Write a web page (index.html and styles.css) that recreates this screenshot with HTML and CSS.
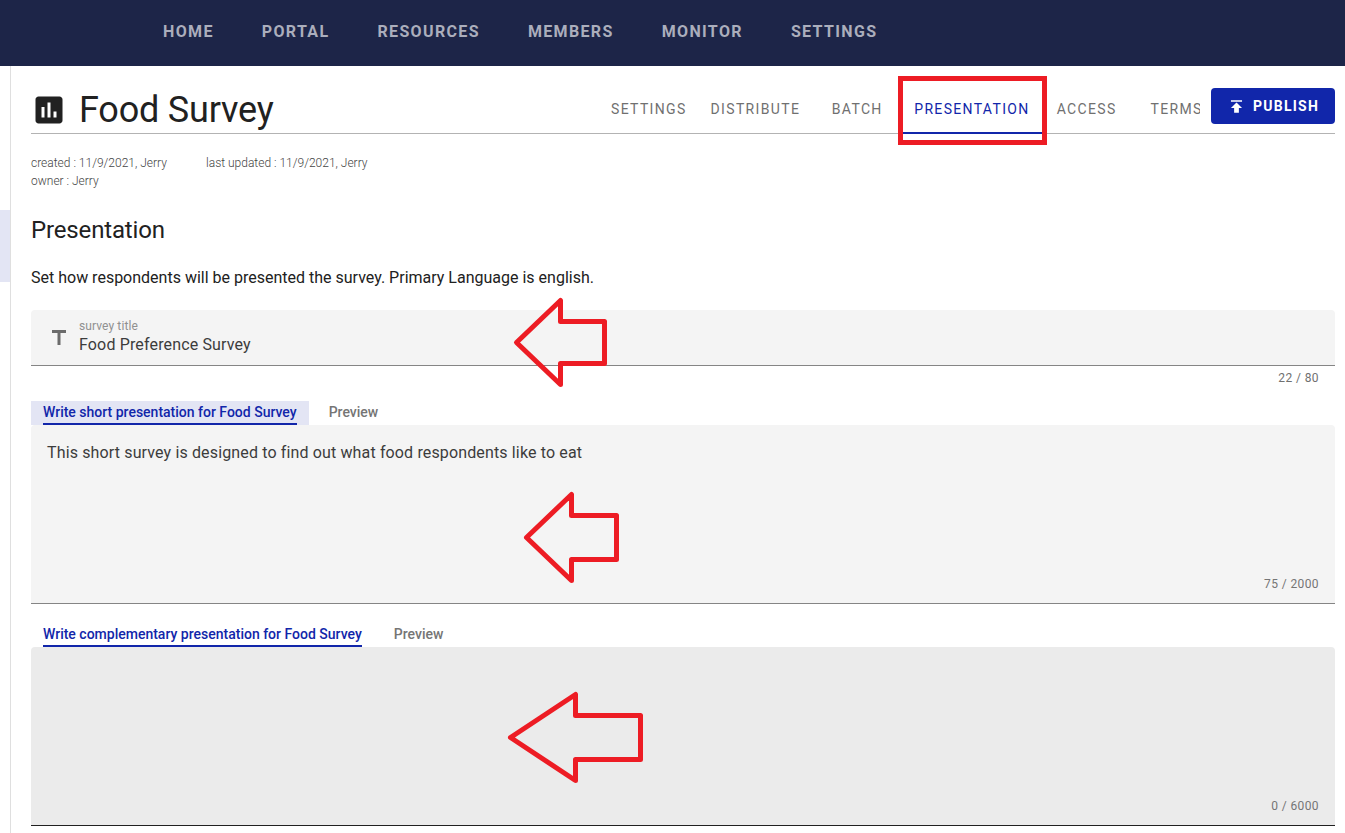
FILE: index.html
```html
<!DOCTYPE html>
<html lang="en">
<head>
<meta charset="utf-8">
<title>Food Survey</title>
<link rel="stylesheet" href="styles.css">
</head>
<body>
<div class="app">
  <nav class="topbar">
    <a>HOME</a><a>PORTAL</a><a>RESOURCES</a><a>MEMBERS</a><a>MONITOR</a><a>SETTINGS</a>
  </nav>
  <div class="body">
    <aside class="rail"><div class="rail-active"></div></aside>
    <main class="content">
      <header class="survey-head">
        <svg class="survey-icon" viewBox="0 0 24 24"><path d="M19 3H5c-1.100 0-2 .9-2 2v14c0 1.100.9 2 2 2h14c1.100 0 2-.9 2-2V5c0-1.100-.9-2-2-2zM9 17H7v-7h2v7zm4 0h-2V7h2v10zm4 0h-2v-4h2v4z"/></svg>
        <h1>Food Survey</h1>
        <div class="tabs">
          <div class="tab"><span>SETTINGS</span></div>
          <div class="tab"><span>DISTRIBUTE</span></div>
          <div class="tab"><span>BATCH</span></div>
          <div class="tab active"><span>PRESENTATION</span></div>
          <div class="tab"><span>ACCESS</span></div>
          <div class="tab"><span>TERMS</span></div>
        </div>
        <button class="publish"><svg viewBox="0 0 24 24"><path d="M5 4v2h14V4H5zm0 10h4v6h6v-6h4l-7-7-7 7z"/></svg><span>PUBLISH</span></button>
      </header>
      <div class="meta">
        <div class="meta-row"><span class="created">created : 11/9/2021, Jerry</span><span>last updated : 11/9/2021, Jerry</span></div>
        <div>owner : Jerry</div>
      </div>
      <h2>Presentation</h2>
      <p class="intro">Set how respondents will be presented the survey. Primary Language is english.</p>
      <div class="title-field">
        <svg class="t-icon" viewBox="0 0 24 24"><path d="M5 4v3h5.500v12h3V7H19V4z"/></svg>
        <div class="field-text"><label>survey title</label><div class="value">Food Preference Survey</div></div>
      </div>
      <div class="title-count">22 / 80</div>
      <div class="mini-tabs">
        <div class="mini selected"><span>Write short presentation for Food Survey</span></div>
        <div class="mini preview"><span>Preview</span></div>
      </div>
      <section class="area">
        <div class="area-text">This short survey is designed to find out what food respondents like to eat</div>
        <div class="count">75 / 2000</div>
      </section>
      <div class="mini-tabs second">
        <div class="mini current"><span>Write complementary presentation for Food Survey</span></div>
        <div class="mini preview"><span>Preview</span></div>
      </div>
      <section class="area hovered">
        <div class="area-text"></div>
        <div class="count">0 / 6000</div>
      </section>
    </main>
  </div>
  <svg class="annotations" viewBox="0 0 1345 833">
    <rect x="900.5" y="78.500" width="144" height="64" stroke-linejoin="miter"/>
    <path d="M560.500 300.500V321.500H604.500V363.500H560.500V384.500L516.500 342.500Z"/>
    <path d="M571.500 494.500V515.500H616.500V559.500H571.500V580.500L526.500 537.500Z"/>
    <path d="M575.500 694.500V715.500H640.500V759.500H575.500V780.500L510.500 737.500Z"/>
  </svg>
</div>
</body>
</html>
```
FILE: styles.css
```css
* { box-sizing: border-box; }
body { margin: 0; background: #fff; font-family: Roboto, "Liberation Sans", sans-serif; color: #212121; }
.app { position: relative; width: 1345px; height: 833px; overflow: hidden; display: flex; flex-direction: column; }
.topbar { flex: none; height: 66px; background: #1d2548; display: flex; gap: 48px; padding: 20px 0 0 163px; font-size: 16px; font-weight: 700; line-height: 23px; letter-spacing: 1.35px; color: #abaebc; }
.body { flex: 1; display: flex; min-height: 0; }
.rail { width: 11px; border-right: 1px solid #dfdfdf; padding-top: 144px; }
.rail-active { height: 72px; background: #e3e5f4; }
.content { width: 1324px; padding-left: 20px; }
.survey-head { height: 68px; border-bottom: 1px solid #b3b3b3; display: flex; }
.survey-icon { width: 36px; height: 36px; margin-top: 26px; fill: #212121; }
h1 { margin: 20px 0 0 12px; width: 520px; font-size: 36px; font-weight: 400; line-height: 48px; letter-spacing: -.2px; }
.tabs { width: 601px; height: 68px; display: flex; overflow: hidden; }
.tab { flex: none; min-width: 90px; padding: 32px 12px 0; font-size: 14px; line-height: 22px; letter-spacing: 1.34px; text-align: center; color: #707070; height: 68px; }
.tab.active { color: #1126aa; border-bottom: 2px solid #1126aa; }
.publish { flex: none; margin: 22px 0 0 11px; width: 124px; height: 36px; border: 0; border-radius: 4px; background: #1126aa; color: #fff; font: 700 14px/36px Roboto, sans-serif; letter-spacing: 1.25px; padding: 0 0 0 16px; display: flex; align-items: center; }
.publish svg { width: 19px; height: 19px; fill: #fff; margin-right: 7px; }
.meta { margin-top: 20px; height: 36px; font-size: 12px; font-weight: 300; line-height: 18px; color: #444; }
.meta-row { display: flex; }
.created { width: 175px; }
h2 { margin: 24px 0 0; font-size: 24px; line-height: 32px; font-weight: 400; letter-spacing: -.15px; }
.intro { margin: 20px 0 0; font-size: 16px; line-height: 24px; }
.title-field { margin-top: 20px; height: 56px; background: #f4f4f4; border-bottom: 1px solid #858585; border-radius: 4px 4px 0 0; display: flex; padding-left: 16px; }
.t-icon { width: 24px; height: 24px; margin: 16px 8px 0 0; fill: #6b6b6b; }
.field-text { padding-top: 8px; }
label { display: block; font-size: 12px; line-height: 16px; letter-spacing: .1px; color: #909090; }
.value { font-size: 16px; line-height: 22px; letter-spacing: .15px; color: #3c3c3c; }
.title-count { height: 35px; padding: 3px 16px 0 0; text-align: right; font-size: 12px; line-height: 18px; letter-spacing: .4px; color: #707070; }
.mini-tabs { height: 24px; display: flex; font-size: 14px; line-height: 22px; font-weight: 500; }
.mini { padding: 0 12px; height: 24px; color: #1126aa; }
.mini span { display: block; height: 24px; border-bottom: 2px solid #1126aa; }
.selected { background: #e3e5f4; }
.mini.preview { margin-left: 8px; color: #757575; }
.preview span { border: 0; }
.area { height: 179px; background: #f4f4f4; border-bottom: 1px solid #858585; border-radius: 4px 4px 0 0; padding: 16px 16px 11px; display: flex; flex-direction: column; justify-content: space-between; }
.area-text { font-size: 16px; line-height: 23px; letter-spacing: .14px; color: #3c3c3c; }
.count { text-align: right; font-size: 12px; line-height: 16px; letter-spacing: .4px; color: #757575; }
.second { margin-top: 19px; }
.hovered { background: #ebebeb; border-bottom-color: #212121; }
.annotations { position: absolute; left: 0; top: 0; width: 1345px; height: 833px; fill: none; stroke: #ed1c24; stroke-width: 5; stroke-linejoin: round; pointer-events: none; }
```
